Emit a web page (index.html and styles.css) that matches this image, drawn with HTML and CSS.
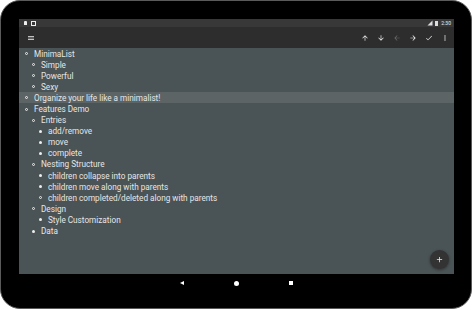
FILE: index.html
```html
<!DOCTYPE html>
<html lang="en">
<head>
    <meta charset="UTF-8">
    <meta name="viewport" content="width=device-width, initial-scale=1.0">
    <title>MinimaList</title>
    <link rel="stylesheet" href="styles.css">
</head>
<body>
    <div class="tablet">
        <div class="screen">
            <div class="status-bar">
                <div class="status-left">
                    <span class="note-icon"></span>
                    <span class="sq-icon"></span>
                </div>
                <div class="status-right">
                    <svg width="6" height="6" viewBox="0 0 24 24"><path fill="#ddd" d="M2 22h20V2z"/></svg>
                    <span class="battery"></span>
                    <span class="clock">2:30</span>
                </div>
            </div>
            <div class="toolbar">
                <button class="icon-btn menu-btn">
                    <svg viewBox="0 0 24 24"><path d="M3 18h18v-2H3v2zm0-5h18v-2H3v2zm0-7v2h18V6H3z"/></svg>
                </button>
                <div class="actions">
                    <button class="icon-btn"><svg viewBox="0 0 24 24"><path d="M4 12l1.41 1.41L11 7.830V20h2V7.83l5.58 5.59L20 12l-8-8-8 8z"/></svg></button>
                    <button class="icon-btn"><svg viewBox="0 0 24 24"><path d="M20 12l-1.41-1.41L13 16.17V4h-2v12.17l-5.58-5.59L4 12l8 8 8-8z"/></svg></button>
                    <button class="icon-btn disabled"><svg viewBox="0 0 24 24"><path d="M20 11H7.83l5.59-5.59L12 4l-8 8 8 8 1.41-1.41L7.83 13H20v-2z"/></svg></button>
                    <button class="icon-btn"><svg viewBox="0 0 24 24"><path d="M12 4l-1.41 1.41L16.17 11H4v2h12.17l-5.58 5.59L12 20l8-8z"/></svg></button>
                    <button class="icon-btn"><svg viewBox="0 0 24 24"><path d="M9 16.17L4.830 12l-1.42 1.41L9 19 21 7l-1.41-1.41z"/></svg></button>
                    <button class="icon-btn"><svg viewBox="0 0 24 24"><path d="M12 8c1.1 0 2-.9 2-2s-.9-2-2-2-2 .9-2 2 .9 2 2 2zm0 2c-1.1 0-2 .9-2 2s.9 2 2 2 2-.9 2-2-.9-2-2-2zm0 6c-1.1 0-2 .9-2 2s.9 2 2 2 2-.9 2-2-.9-2-2-2z"/></svg></button>
                </div>
            </div>
            <div class="content">
                <ul class="list">
                    <li class="item lvl0 open">MinimaList</li>
                    <li class="item lvl1 open">Simple</li>
                    <li class="item lvl1 open">Powerful</li>
                    <li class="item lvl1 open">Sexy</li>
                    <li class="item lvl0 open selected">Organize your life like a minimalist!</li>
                    <li class="item lvl0 open">Features Demo</li>
                    <li class="item lvl1 open">Entries</li>
                    <li class="item lvl2">add/remove</li>
                    <li class="item lvl2">move</li>
                    <li class="item lvl2">complete</li>
                    <li class="item lvl1 open">Nesting Structure</li>
                    <li class="item lvl2">children collapse into parents</li>
                    <li class="item lvl2">children move along with parents</li>
                    <li class="item lvl2 open">children completed/deleted along with parents</li>
                    <li class="item lvl1 open">Design</li>
                    <li class="item lvl2">Style Customization</li>
                    <li class="item lvl1">Data</li>
                </ul>
                <button class="fab">
                    <svg viewBox="0 0 24 24"><path d="M19 13h-6v6h-2v-6H5v-2h6V5h2v6h6v2z"/></svg>
                </button>
            </div>
            <div class="nav-bar">
                <span class="nav-back"></span>
                <span class="nav-home"></span>
                <span class="nav-recent"></span>
            </div>
        </div>
    </div>
</body>
</html>
```

FILE: styles.css
```css
body {
    margin: 0;
    background: #fff;
    font-family: Roboto, "Liberation Sans", sans-serif;
}

.tablet {
    box-sizing: border-box;
    width: 472px;
    height: 309px;
    background: #000;
    border: 1px solid #5a5a5a;
    border-radius: 20px;
    padding: 18px 17px 0 18px;
}

.screen {
    display: flex;
    flex-direction: column;
    width: 435px;
}

.status-bar {
    height: 8px;
    background: #383838;
    display: flex;
    justify-content: space-between;
    align-items: center;
    padding: 0 3px 0 5px;
}
.status-left, .status-right {
    display: flex;
    align-items: center;
    gap: 2px;
}
.note-icon {
    width: 3px;
    height: 4px;
    background: #eee;
    border-radius: 1px 1px 0 0;
}
.sq-icon {
    width: 3px;
    height: 3px;
    border: 1px solid #eee;
    margin-left: 2px;
}
.battery {
    width: 3px;
    height: 5px;
    background: #ddd;
}
.clock {
    color: #eee;
    font-size: 5px;
    margin-left: 1px;
}

.toolbar {
    height: 21px;
    background: #2d2d2d;
    display: flex;
    justify-content: space-between;
    align-items: center;
    padding: 0 1px 0 4px;
}
.actions {
    display: flex;
}
.icon-btn {
    width: 16px;
    height: 16px;
    padding: 0;
    border: 0;
    background: none;
    display: flex;
    align-items: center;
    justify-content: center;
}
.icon-btn svg {
    width: 8px;
    height: 8px;
    fill: #f2f2f2;
}
.icon-btn.disabled svg {
    fill: #6a6a6a;
}

.content {
    position: relative;
    height: 226px;
    background: #4a5355;
}
.list {
    list-style: none;
    margin: 0;
    padding: 0;
}
.item {
    display: flex;
    align-items: center;
    height: 11.1px;
    font-size: 8.2px;
    color: #e6e6e6;
    white-space: nowrap;
}
.item::before {
    content: "";
    box-sizing: border-box;
    width: 3px;
    height: 3px;
    border-radius: 50%;
    background: #eee;
    margin-right: 6px;
    flex-shrink: 0;
}
.item.open::before {
    background: none;
    border: 1px solid #eee;
}
.lvl0 { padding-left: 6px; }
.lvl1 { padding-left: 13px; }
.lvl2 { padding-left: 20px; }
.item.selected {
    background: #5c6466;
}

.fab {
    position: absolute;
    right: 5px;
    bottom: 5px;
    width: 19px;
    height: 19px;
    border: 0;
    padding: 0;
    border-radius: 50%;
    background: #333;
    box-shadow: 0 1px 3px rgba(0,0,0,0.4);
    display: flex;
    align-items: center;
    justify-content: center;
}
.fab svg {
    width: 9px;
    height: 9px;
    fill: #eee;
}

.nav-bar {
    height: 18px;
    background: #000;
    display: flex;
    justify-content: center;
    align-items: center;
    gap: 50px;
}
.nav-back {
    width: 0;
    height: 0;
    border-top: 2.5px solid transparent;
    border-bottom: 2.5px solid transparent;
    border-right: 4px solid #fff;
}
.nav-home {
    width: 5px;
    height: 5px;
    border-radius: 50%;
    background: #fff;
}
.nav-recent {
    width: 4px;
    height: 4px;
    background: #fff;
}
```
